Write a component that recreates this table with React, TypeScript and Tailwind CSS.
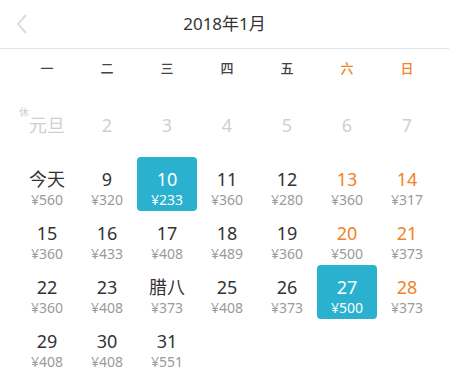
const weekDays = ["一", "二", "三", "四", "五", "六", "日"];

type Day = { label: string; price?: string; weekend?: boolean; selected?: boolean; past?: boolean; rest?: boolean };

const rows: (Day | null)[][] = [
  [
    { label: "元旦", past: true, rest: true },
    { label: "2", past: true },
    { label: "3", past: true },
    { label: "4", past: true },
    { label: "5", past: true },
    { label: "6", past: true },
    { label: "7", past: true },
  ],
  [
    { label: "今天", price: "560" },
    { label: "9", price: "320" },
    { label: "10", price: "233", selected: true },
    { label: "11", price: "360" },
    { label: "12", price: "280" },
    { label: "13", price: "360", weekend: true },
    { label: "14", price: "317", weekend: true },
  ],
  [
    { label: "15", price: "360" },
    { label: "16", price: "433" },
    { label: "17", price: "408" },
    { label: "18", price: "489" },
    { label: "19", price: "360" },
    { label: "20", price: "500", weekend: true },
    { label: "21", price: "373", weekend: true },
  ],
  [
    { label: "22", price: "360" },
    { label: "23", price: "408" },
    { label: "腊八", price: "373" },
    { label: "25", price: "408" },
    { label: "26", price: "373" },
    { label: "27", price: "500", weekend: true, selected: true },
    { label: "28", price: "373", weekend: true },
  ],
  [
    { label: "29", price: "408" },
    { label: "30", price: "408" },
    { label: "31", price: "551" },
    null,
    null,
    null,
    null,
  ],
];

function Cell({ day }: { day: Day | null }) {
  if (!day) return <div className="h-[54px]" />;
  const numColor = day.selected
    ? "text-white"
    : day.past
      ? "text-[#cfcfcf]"
      : day.weekend
        ? "text-[#f08228]"
        : "text-[#333333]";
  return (
    <div
      className={`relative h-[54px] flex flex-col items-center pt-[11px] rounded-[4px] ${
        day.selected ? "bg-[#29b1cf]" : ""
      }`}
    >
      {day.rest && (
        <span className="absolute left-[2px] top-[3px] text-[10px] leading-[12px] text-[#cfcfcf]">休</span>
      )}
      <span className={`text-[18px] leading-[23px] ${numColor}`}>{day.label}</span>
      {day.price && (
        <span className={`text-[14px] leading-[17px] ${day.selected ? "text-white" : "text-[#9a9a9a]"}`}>
          ¥{day.price}
        </span>
      )}
    </div>
  );
}

export default function App() {
  return (
    <div
      className="w-[449px] h-[383px] bg-white overflow-hidden"
      style={{ fontFamily: '"Noto Sans", "Noto Sans CJK SC", sans-serif' }}
    >
      <div className="relative h-[49px] flex items-center justify-center border-b border-[#e3e3e3]">
        <svg className="absolute left-[14px] top-[12px]" width="16" height="24" viewBox="0 0 16 24">
          <path d="M12 3 L4 12 L12 21" fill="none" stroke="#dedede" strokeWidth="2" />
        </svg>
        <span className="text-[17px] text-[#333333]">2018年1月</span>
      </div>
      <div className="grid grid-cols-[repeat(7,60px)] pl-[17px] h-[40px] items-center">
        {weekDays.map((w, i) => (
          <div
            key={w}
            className={`text-center text-[13px] font-medium ${i >= 5 ? "text-[#f08228]" : "text-[#444444]"}`}
          >
            {w}
          </div>
        ))}
      </div>
      <div className="pt-[14px] pl-[17px] flex flex-col">
        {rows.map((row, r) => (
          <div key={r} className="grid grid-cols-[repeat(7,60px)]">
            {row.map((d, c) => (
              <Cell key={c} day={d} />
            ))}
          </div>
        ))}
      </div>
    </div>
  );
}
